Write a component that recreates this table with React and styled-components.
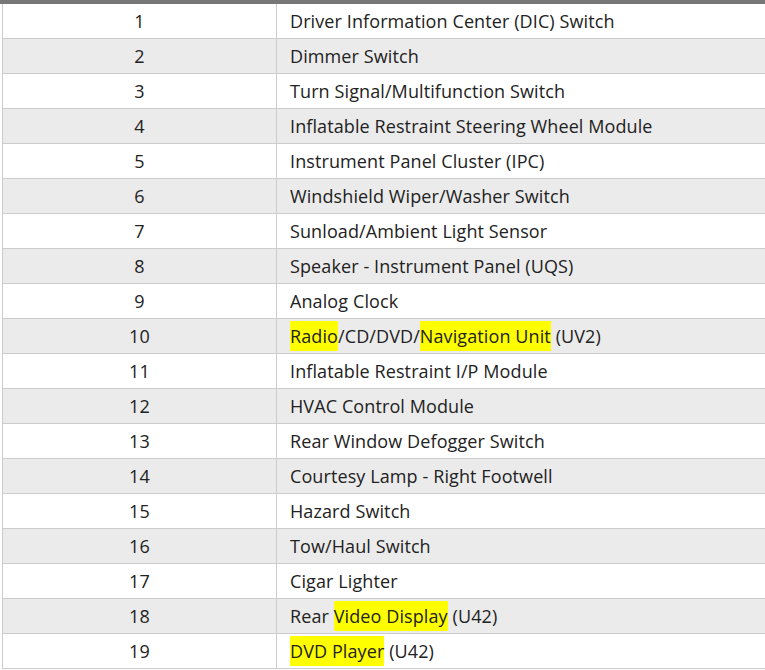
import React from "react"
import styled, { createGlobalStyle } from "styled-components"

const GlobalStyle = createGlobalStyle`
  html, body {
    margin: 0;
    padding: 0;
    background: #ffffff;
    overflow: hidden;
  }
`

const Wrapper = styled.div`
  padding-left: 2px;
  border-top: 4px solid #777777;
  width: 790px;
`

const Table = styled.table`
  border-collapse: collapse;
  width: 100%;
  font-family: "Open Sans", "Noto Sans", sans-serif;
  font-size: 18px;
  letter-spacing: 0.1px;
  color: #222222;
`

const Row = styled.tr`
  height: 35px;
  background: ${props => (props.$even ? "#ebebeb" : "#ffffff")};
  &:first-child {
    height: 34px;
  }
`

const NumCell = styled.td`
  width: 273px;
  text-align: center;
  border: 1px solid #cccccc;
  border-top: none;
  padding: 0;
`

const NameCell = styled.td`
  border-bottom: 1px solid #cccccc;
  border-left: 1px solid #cccccc;
  padding: 0 0 0 13px;
`

const Mark = styled.span`
  background: #ffff00;
  padding: 3px 0;
`

const rows = [
  ["Driver Information Center (DIC) Switch"],
  ["Dimmer Switch"],
  ["Turn Signal/Multifunction Switch"],
  ["Inflatable Restraint Steering Wheel Module"],
  ["Instrument Panel Cluster (IPC)"],
  ["Windshield Wiper/Washer Switch"],
  ["Sunload/Ambient Light Sensor"],
  ["Speaker - Instrument Panel (UQS)"],
  ["Analog Clock"],
  [{ m: "Radio" }, "/CD/DVD/", { m: "Navigation Unit" }, " (UV2)"],
  ["Inflatable Restraint I/P Module"],
  ["HVAC Control Module"],
  ["Rear Window Defogger Switch"],
  ["Courtesy Lamp - Right Footwell"],
  ["Hazard Switch"],
  ["Tow/Haul Switch"],
  ["Cigar Lighter"],
  ["Rear ", { m: "Video Display" }, " (U42)"],
  [{ m: "DVD Player" }, " (U42)"],
]

export default function App() {
  return (
    <Wrapper>
      <GlobalStyle />
      <Table>
        <tbody>
          {rows.map((parts, i) => (
            <Row key={i} $even={i % 2 === 1}>
              <NumCell>{i + 1}</NumCell>
              <NameCell>
                {parts.map((p, j) =>
                  typeof p === "string" ? p : <Mark key={j}>{p.m}</Mark>
                )}
              </NameCell>
            </Row>
          ))}
        </tbody>
      </Table>
    </Wrapper>
  )
}
